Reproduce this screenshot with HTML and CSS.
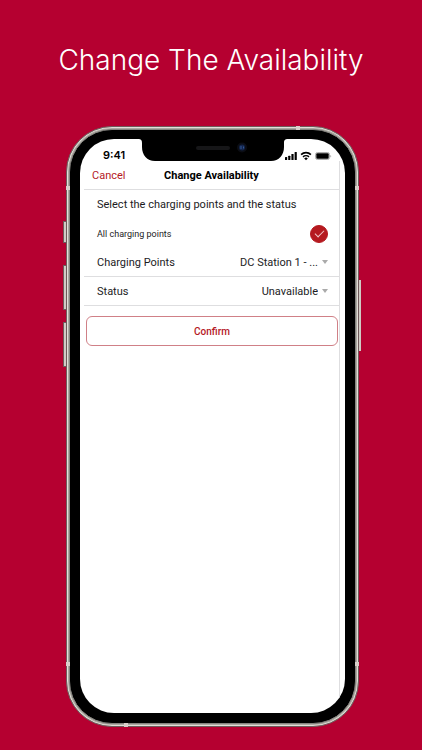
FILE: index.html
```html
<!DOCTYPE html>
<html lang="en">
<head>
  <meta charset="UTF-8" />
  <meta name="viewport" content="width=device-width, initial-scale=1" />
  <title>Change The Availability</title>
  <link rel="stylesheet" href="styles.css">
</head>
<body>
  <h1 class="headline">Change The Availability</h1>

  <main class="stage">
    <div class="phone">
      <span class="side-key key-mute"></span>
      <span class="side-key key-up"></span>
      <span class="side-key key-down"></span>
      <span class="side-key key-power"></span>
      <span class="band band-left-top"></span>
      <span class="band band-left-bottom"></span>
      <span class="band band-right-top"></span>
      <span class="band band-right-bottom"></span>
      <span class="band band-top"></span>
      <span class="band band-bottom"></span>

      <div class="bezel">
        <div class="screen">
          <svg class="notch" width="150" height="22" viewBox="0 0 150 22" aria-hidden="true">
            <path d="M0 0C3 0 4 1 4 4V8C4 16 9 22 17 22H133C141 22 146 16 146 8V4C146 1 147 0 150 0Z" fill="#000"/>
            <rect x="58" y="7" width="34" height="4" rx="2" fill="#161618"/>
            <circle cx="104" cy="8.500" r="5" fill="#0b0d14"/>
            <circle cx="104" cy="8.500" r="3" fill="#13244a"/>
            <path d="M103 7v3M105.500 7.500v2" stroke="#3b65a8" stroke-width="0.800"/>
          </svg>

          <div class="status-bar">
            <span class="clock">9:41</span>
            <svg class="status-icons" width="47" height="10" viewBox="0 0 47 10" aria-hidden="true">
              <rect x="0" y="6" width="2.200" height="3" rx="0.500"/>
              <rect x="3.200" y="4.800" width="2.200" height="4.200" rx="0.500"/>
              <rect x="6.400" y="3" width="2.200" height="6" rx="0.500"/>
              <rect x="9.600" y="1" width="2.200" height="8" rx="0.500"/>
              <path d="M16.100 3.700a7 7 0 0 1 9.800 0" fill="none" stroke="#000" stroke-width="1.700"/>
              <path d="M18 5.900a4.400 4.400 0 0 1 6 0" fill="none" stroke="#000" stroke-width="1.500"/>
              <path d="M19.200 7.400a2.600 2.600 0 0 1 3.600 0L21 9.300Z"/>
              <rect x="30.500" y="1.500" width="14" height="7" rx="2" fill="none" stroke="#999" stroke-width="0.800"/>
              <rect x="31.300" y="2.300" width="12.400" height="5.400" rx="1"/>
              <path d="M45.400 4v2.400a1.300 1.300 0 0 0 0-2.400Z" fill="#999"/>
            </svg>
          </div>

          <form class="app">
            <header class="nav-bar">
              <button type="button" class="cancel">Cancel</button>
              <h2 class="nav-title">Change Availability</h2>
            </header>

            <p class="row hint">Select the charging points and the status</p>

            <div class="row">
              <label class="small" for="allPoints">All charging points</label>
              <input class="check" type="checkbox" id="allPoints" checked>
            </div>

            <div class="row ruled">
              <label for="chargingPoints">Charging Points</label>
              <select class="picker" id="chargingPoints">
                <option>DC Station 1 - ...</option>
              </select>
              <span class="caret"></span>
            </div>

            <div class="row ruled">
              <label for="status">Status</label>
              <select class="picker" id="status">
                <option>Unavailable</option>
                <option>Available</option>
              </select>
              <span class="caret"></span>
            </div>

            <button type="submit" class="confirm">Confirm</button>
          </form>
        </div>
      </div>
    </div>
  </main>
</body>
</html>
```

FILE: styles.css
```css
:root {
  --brand: #b50030;
  --accent: #b5191f;
  --text: #1c1c1e;
  --rule: #dedee0;
}

* {
  box-sizing: border-box;
}

body {
  margin: 0;
  background: var(--brand);
  color: var(--text);
  font-family: Roboto, sans-serif;
  font-size: 11px;
}

button,
select {
  font: inherit;
  cursor: pointer;
}

.headline {
  margin: 0;
  padding: 40px 0 46px;
  color: #fff;
  font-family: Inter, sans-serif;
  font-size: 28px;
  font-weight: 300;
  line-height: 40px;
  text-align: center;
}

/* the left keys stick out further than the right one */
.stage {
  display: flex;
  justify-content: center;
  padding: 0 0 23px 3px;
}

.phone {
  position: relative;
  width: 100%;
  max-width: 293px;
  padding: 2px;
  border: 1px solid #6e5a5a;
  border-radius: 46px;
  background: #aaa8a0;
  box-shadow: inset 0 0 0 1px #e2ded8;
}

.bezel {
  padding: 9px 10px 10px;
  border: 1px solid #85837f;
  border-radius: 43px;
  background: #000;
}

.screen {
  position: relative;
  display: flex;
  flex-direction: column;
  min-height: 574px;
  border-radius: 34px;
  background: #fff;
  overflow: hidden;
}

.notch {
  position: absolute;
  top: 0;
  left: 50%;
  transform: translateX(-50%);
}

/* hardware keys */
.side-key {
  position: absolute;
  left: -4px;
  width: 3px;
  border: 1px solid #6e5a5a;
  border-right: 0;
  background: #cfcac4;
}

.key-mute {
  top: 94px;
  height: 22px;
}

.key-up {
  top: 138px;
  height: 45px;
}

.key-down {
  top: 195px;
  height: 45px;
}

.key-power {
  top: 153px;
  left: auto;
  right: -3px;
  width: 2px;
  height: 71px;
  border: 0;
}

/* antenna bands */
.band {
  position: absolute;
  width: 4px;
  height: 4px;
  background: #d8d0ca;
}

.band-left-top,
.band-left-bottom {
  left: -1px;
}

.band-right-top,
.band-right-bottom {
  right: -1px;
}

.band-left-top,
.band-right-top {
  top: 59px;
}

.band-left-bottom,
.band-right-bottom {
  bottom: 60px;
}

.band-top {
  top: -1px;
  right: 58px;
}

.band-bottom {
  bottom: -1px;
  left: 57px;
}

.status-bar {
  display: flex;
  justify-content: space-between;
  align-items: flex-end;
  height: 22px;
  padding: 0 13px 0 23px;
}

.clock {
  color: #000;
  font-family: Inter, sans-serif;
  font-size: 11px;
  font-weight: 600;
  line-height: 12px;
}

.app {
  flex: 1;
  margin: 0 5px 0 4px;
  border-right: 1px solid var(--rule);
}

.nav-bar {
  display: grid;
  grid-template-columns: 1fr auto 1fr;
  align-items: center;
  height: 29px;
  padding: 0 8px;
  border-bottom: 1px solid var(--rule);
}

.cancel {
  justify-self: start;
  padding: 0;
  border: 0;
  background: none;
  color: var(--accent);
}

.nav-title {
  margin: 0;
  color: #000;
  font-size: 11px;
  font-weight: 700;
}

.row {
  display: flex;
  align-items: center;
  height: 29px;
  margin: 0;
  padding: 0 11px 0 13px;
}

.ruled {
  border-bottom: 1px solid var(--rule);
}

.small {
  font-size: 9px;
}

.check {
  appearance: none;
  display: grid;
  place-items: center;
  width: 18px;
  height: 18px;
  margin: 0 0 0 auto;
  border: 1px solid var(--accent);
  border-radius: 50%;
}

.check:checked {
  background: var(--accent);
}

.check:checked::after {
  content: "";
  width: 8px;
  height: 4px;
  margin-bottom: 2px;
  border: solid #f0c8ca;
  border-width: 0 0 1px 1px;
  transform: rotate(-45deg);
}

.picker {
  appearance: none;
  flex: 1;
  padding: 0;
  border: 0;
  background: none;
  color: inherit;
  text-align: right;
  text-align-last: right;
}

.caret {
  margin-left: 4px;
  border: 3px solid transparent;
  border-top: 4px solid #aaa;
  border-bottom: 0;
}

.confirm {
  display: block;
  width: calc(100% - 3px);
  height: 30px;
  margin: 10px 1px 0 2px;
  padding: 0;
  border: 1px solid #d08087;
  border-radius: 6px;
  background: #fff;
  color: var(--accent);
  font-size: 10px;
  font-weight: 500;
}
```
